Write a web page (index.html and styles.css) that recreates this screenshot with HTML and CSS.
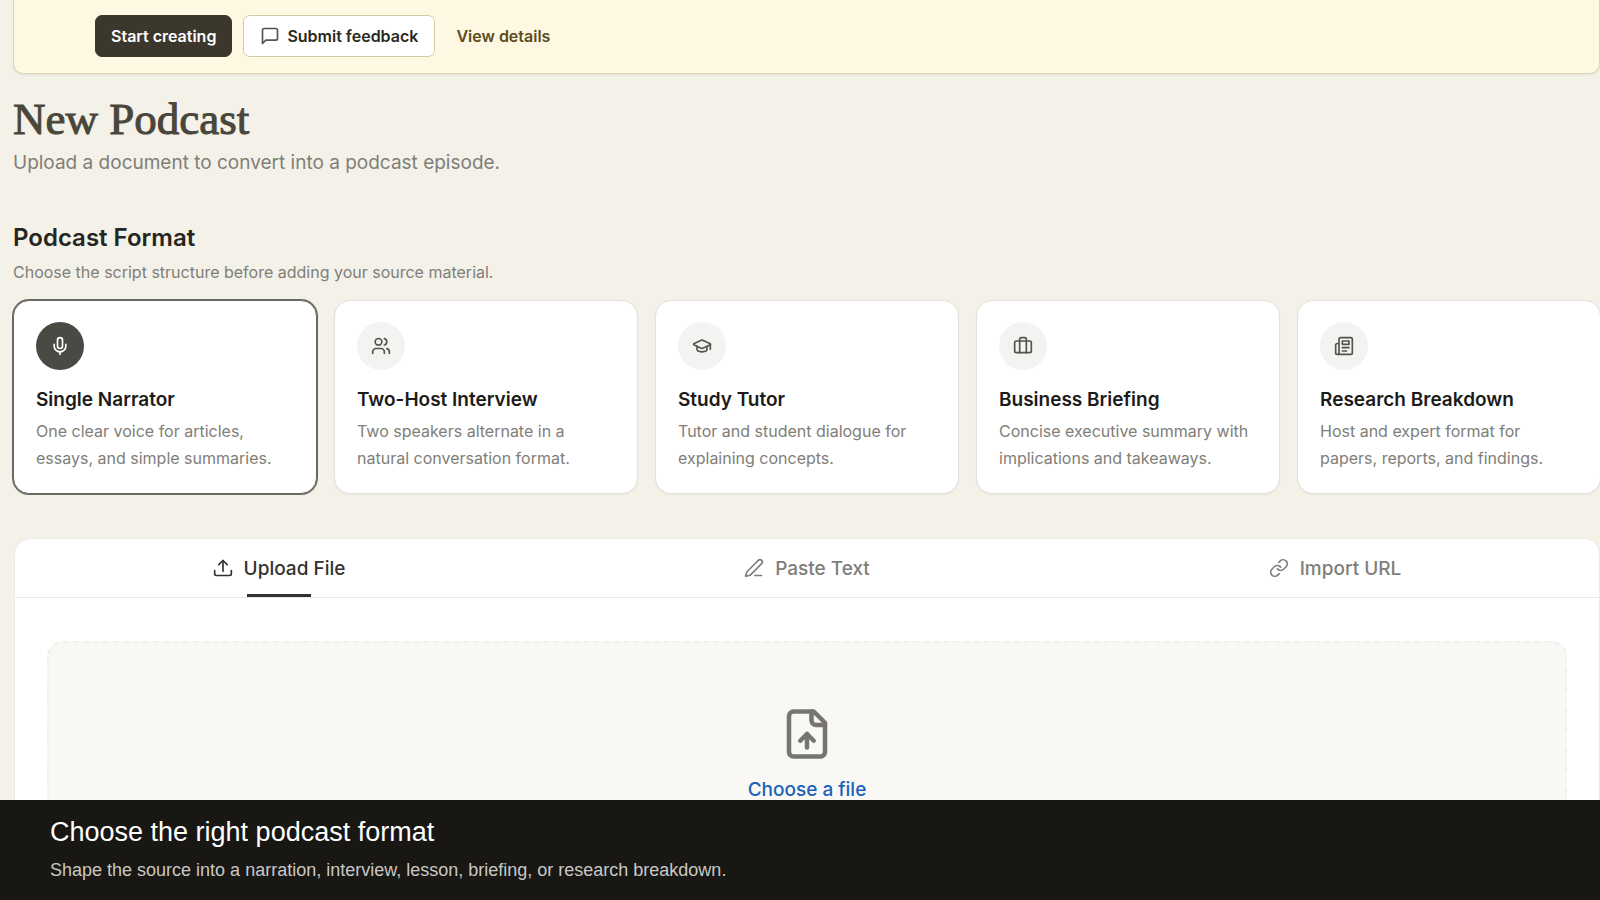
FILE: index.html
```html
<!DOCTYPE html>
<html lang="en">
<head>
    <meta charset="UTF-8">
    <meta name="viewport" content="width=device-width, initial-scale=1.0">
    <title>New Podcast</title>
    <link rel="stylesheet" href="styles.css">
</head>
<body>
    <div class="app">
        <!-- Announcement banner -->
        <div class="banner">
            <button type="button" class="btn btn-dark">Start creating</button>
            <button type="button" class="btn btn-light">
                <svg class="icon" viewBox="0 0 24 24"><path d="M21 15a2 2 0 0 1-2 2H7l-4 4V5a2 2 0 0 1 2-2h14a2 2 0 0 1 2 2z"/></svg>
                Submit feedback
            </button>
            <a href="#details" class="banner-link">View details</a>
        </div>

        <header class="page-header">
            <h1>New Podcast</h1>
            <p>Upload a document to convert into a podcast episode.</p>
        </header>

        <!-- Format picker -->
        <section class="formats">
            <h2>Podcast Format</h2>
            <p class="formats-hint">Choose the script structure before adding your source material.</p>
            <div class="format-grid">
                <button type="button" class="format-card selected" aria-pressed="true">
                    <span class="format-icon">
                        <svg class="icon" viewBox="0 0 24 24"><path d="M12 2a3 3 0 0 0-3 3v7a3 3 0 0 0 6 0V5a3 3 0 0 0-3-3Z"/><path d="M19 10v2a7 7 0 0 1-14 0v-2"/><path d="M12 19v3"/></svg>
                    </span>
                    <span class="format-name">Single Narrator</span>
                    <span class="format-text">One clear voice for articles, essays, and simple summaries.</span>
                </button>
                <button type="button" class="format-card" aria-pressed="false">
                    <span class="format-icon">
                        <svg class="icon" viewBox="0 0 24 24"><path d="M16 21v-2a4 4 0 0 0-4-4H6a4 4 0 0 0-4 4v2"/><circle cx="9" cy="7" r="4"/><path d="M22 21v-2a4 4 0 0 0-3-3.87"/><path d="M16 3.13a4 4 0 0 1 0 7.75"/></svg>
                    </span>
                    <span class="format-name">Two-Host Interview</span>
                    <span class="format-text">Two speakers alternate in a natural conversation format.</span>
                </button>
                <button type="button" class="format-card" aria-pressed="false">
                    <span class="format-icon">
                        <svg class="icon" viewBox="0 0 24 24"><path d="M21.42 10.92a1 1 0 0 0-.02-1.84L12.83 5.18a2 2 0 0 0-1.66 0L2.6 9.08a1 1 0 0 0 0 1.83l8.57 3.91a2 2 0 0 0 1.66 0z"/><path d="M22 10v6"/><path d="M6 12.5V16a6 3 0 0 0 12 0v-3.5"/></svg>
                    </span>
                    <span class="format-name">Study Tutor</span>
                    <span class="format-text">Tutor and student dialogue for explaining concepts.</span>
                </button>
                <button type="button" class="format-card" aria-pressed="false">
                    <span class="format-icon">
                        <svg class="icon" viewBox="0 0 24 24"><path d="M16 20V4a2 2 0 0 0-2-2h-4a2 2 0 0 0-2 2v16"/><rect x="2" y="6" width="20" height="14" rx="2"/></svg>
                    </span>
                    <span class="format-name">Business Briefing</span>
                    <span class="format-text">Concise executive summary with implications and takeaways.</span>
                </button>
                <button type="button" class="format-card" aria-pressed="false">
                    <span class="format-icon">
                        <svg class="icon" viewBox="0 0 24 24"><path d="M4 22h16a2 2 0 0 0 2-2V4a2 2 0 0 0-2-2H8a2 2 0 0 0-2 2v16a2 2 0 0 1-2 2Zm0 0a2 2 0 0 1-2-2v-9c0-1.1.9-2 2-2h2"/><path d="M18 14h-8"/><path d="M15 18h-5"/><path d="M10 6h8v4h-8V6Z"/></svg>
                    </span>
                    <span class="format-name">Research Breakdown</span>
                    <span class="format-text">Host and expert format for papers, reports, and findings.</span>
                </button>
            </div>
        </section>

        <!-- Source material -->
        <section class="source">
            <div class="tabs" role="tablist">
                <button type="button" class="tab active" role="tab" aria-selected="true">
                    <svg class="icon" viewBox="0 0 24 24"><path d="M12 16V3"/><path d="m7 8 5-5 5 5"/><path d="M2 15v4a2 2 0 0 0 2 2h16a2 2 0 0 0 2-2v-4"/></svg>
                    Upload File
                </button>
                <button type="button" class="tab" role="tab" aria-selected="false">
                    <svg class="icon" viewBox="0 0 24 24"><path d="M13 21h8"/><path d="M21.17 6.81a1 1 0 0 0-3.98-3.98L3.84 16.17a2 2 0 0 0-.5.83l-1.32 4.35a.5.5 0 0 0 .62.62l4.35-1.32a2 2 0 0 0 .83-.5z"/></svg>
                    Paste Text
                </button>
                <button type="button" class="tab" role="tab" aria-selected="false">
                    <svg class="icon" viewBox="0 0 24 24"><path d="M10 13a5 5 0 0 0 7.54.54l3-3a5 5 0 0 0-7.07-7.07l-1.72 1.71"/><path d="M14 11a5 5 0 0 0-7.54-.54l-3 3a5 5 0 0 0 7.07 7.07l1.71-1.71"/></svg>
                    Import URL
                </button>
            </div>
            <div class="dropzone">
                <svg class="icon" viewBox="0 0 24 24"><path d="M15 2H6a2 2 0 0 0-2 2v16a2 2 0 0 0 2 2h12a2 2 0 0 0 2-2V7Z"/><path d="M14 2v4a2 2 0 0 0 2 2h4"/><path d="M12 12v6"/><path d="m15 15-3-3-3 3"/></svg>
                <button type="button" class="choose-file">Choose a file</button>
            </div>
        </section>
    </div>

    <footer class="caption">
        <p class="caption-title">Choose the right podcast format</p>
        <p class="caption-text">Shape the source into a narration, interview, lesson, briefing, or research breakdown.</p>
    </footer>
</body>
</html>
```
FILE: styles.css
```css
* {
    box-sizing: border-box;
}

body {
    margin: 0;
    height: 100vh;
    display: flex;
    flex-direction: column;
    overflow: hidden;
    background: #f4f1e8;
    color: #262521;
    font-family: Inter, "Liberation Sans", sans-serif;
}

h1, h2, p {
    margin: 0;
}

button {
    font-family: inherit;
    cursor: pointer;
}

.icon {
    width: 20px;
    height: 20px;
    flex: none;
    fill: none;
    stroke: currentColor;
    stroke-width: 2;
    stroke-linecap: round;
    stroke-linejoin: round;
}

.app {
    flex: 1;
    min-height: 0;
    overflow: hidden;
    padding-left: 13px;
}

/* banner */
.banner {
    display: flex;
    align-items: center;
    gap: 11px;
    padding: 15px 81px 16px;
    background: #fef8e3;
    border: 1px solid #ddd5b4;
    border-top: 0;
    border-radius: 0 0 10px 10px;
    box-shadow: 0 1px 2px rgba(0, 0, 0, 0.08);
}

.btn {
    display: flex;
    align-items: center;
    gap: 7px;
    height: 42px;
    padding: 0 15px;
    border: 1px solid #3b372d;
    border-radius: 7px;
    font-size: 16px;
    font-weight: 600;
}

.btn-dark {
    background: #3b372d;
    color: #fff;
}

.btn-light {
    padding: 0 16px;
    background: #fff;
    border-color: #cfcaa4;
    color: #2b2920;
}

.btn-light .icon {
    color: #55534d;
}

.banner-link {
    padding: 0 10px;
    color: #5a4c1c;
    font-size: 16px;
    font-weight: 600;
    text-decoration: none;
}

/* page heading */
.page-header {
    margin-top: 19px;
}

.page-header h1 {
    font-family: "Liberation Serif", serif;
    font-size: 45px;
    font-weight: 400;
    line-height: 52px;
    color: #49463b;
    -webkit-text-stroke: 1px #49463b;
}

.page-header p {
    margin-top: 5px;
    font-size: 19px;
    line-height: 26px;
    color: #807e78;
}

/* format cards */
.formats {
    margin: 45px -1px 0 0;
}

.formats h2 {
    font-size: 24px;
    font-weight: 600;
    line-height: 34px;
}

.formats-hint {
    margin-top: 5px;
    font-size: 16px;
    line-height: 24px;
    color: #807e78;
}

.format-grid {
    display: grid;
    grid-template-columns: repeat(5, 1fr);
    gap: 17px;
    margin-top: 16px;
}

.format-card {
    display: flex;
    flex-direction: column;
    align-items: flex-start;
    padding: 21px 22px;
    background: #fff;
    border: 1px solid #e2e1dc;
    border-radius: 16px;
    box-shadow: 0 1px 2px rgba(0, 0, 0, 0.05);
    text-align: left;
}

.format-card.selected {
    border-color: #6b6963;
    box-shadow: 0 0 0 1px #6b6963;
}

.format-icon {
    display: flex;
    align-items: center;
    justify-content: center;
    width: 48px;
    height: 48px;
    border-radius: 50%;
    background: #f3f3f1;
    color: #55534d;
}

.selected .format-icon {
    background: #4b4943;
    color: #fff;
}

.format-name {
    margin-top: 16px;
    color: #1c1b19;
    font-size: 19px;
    font-weight: 600;
    line-height: 28px;
}

.format-text {
    margin-top: 4px;
    color: #807e78;
    font-size: 16px;
    line-height: 27px;
}

/* source panel */
.source {
    margin: 44px 0 0 1px;
    background: #fff;
    border: 1px solid #eceae3;
    border-radius: 16px;
}

.tabs {
    display: grid;
    grid-template-columns: repeat(3, 1fr);
    border-bottom: 1px solid #e8e8e5;
}

.tab {
    position: relative;
    display: flex;
    align-items: center;
    justify-content: center;
    gap: 11px;
    height: 58px;
    padding: 0;
    background: none;
    border: 0;
    color: #807e78;
    font-size: 19px;
    font-weight: 500;
}

.tab.active {
    color: #33322f;
}

.tab.active::after {
    content: "";
    position: absolute;
    bottom: 0;
    left: calc(50% - 32px);
    width: 64px;
    height: 3px;
    background: #33322f;
}

.dropzone {
    display: flex;
    flex-direction: column;
    align-items: center;
    margin: 43px 32px 32px;
    padding: 64px 32px;
    background: #f9f8f4;
    border: 2px dashed #f0efeb;
    border-radius: 16px;
}

.dropzone .icon {
    width: 54px;
    height: 54px;
    color: #777570;
}

.choose-file {
    margin-top: 15px;
    padding: 0;
    background: none;
    border: 0;
    color: #1a62b8;
    font-size: 19px;
    font-weight: 500;
    line-height: 28px;
}

/* caption bar */
.caption {
    height: 100px;
    padding: 15px 50px;
    background: #181713;
    font-family: "Liberation Sans", Arial, sans-serif;
}

.caption-title {
    color: #fff;
    font-size: 27px;
    line-height: 34px;
}

.caption-text {
    margin-top: 8px;
    color: #c9c8c4;
    font-size: 18px;
    line-height: 26px;
}
```
